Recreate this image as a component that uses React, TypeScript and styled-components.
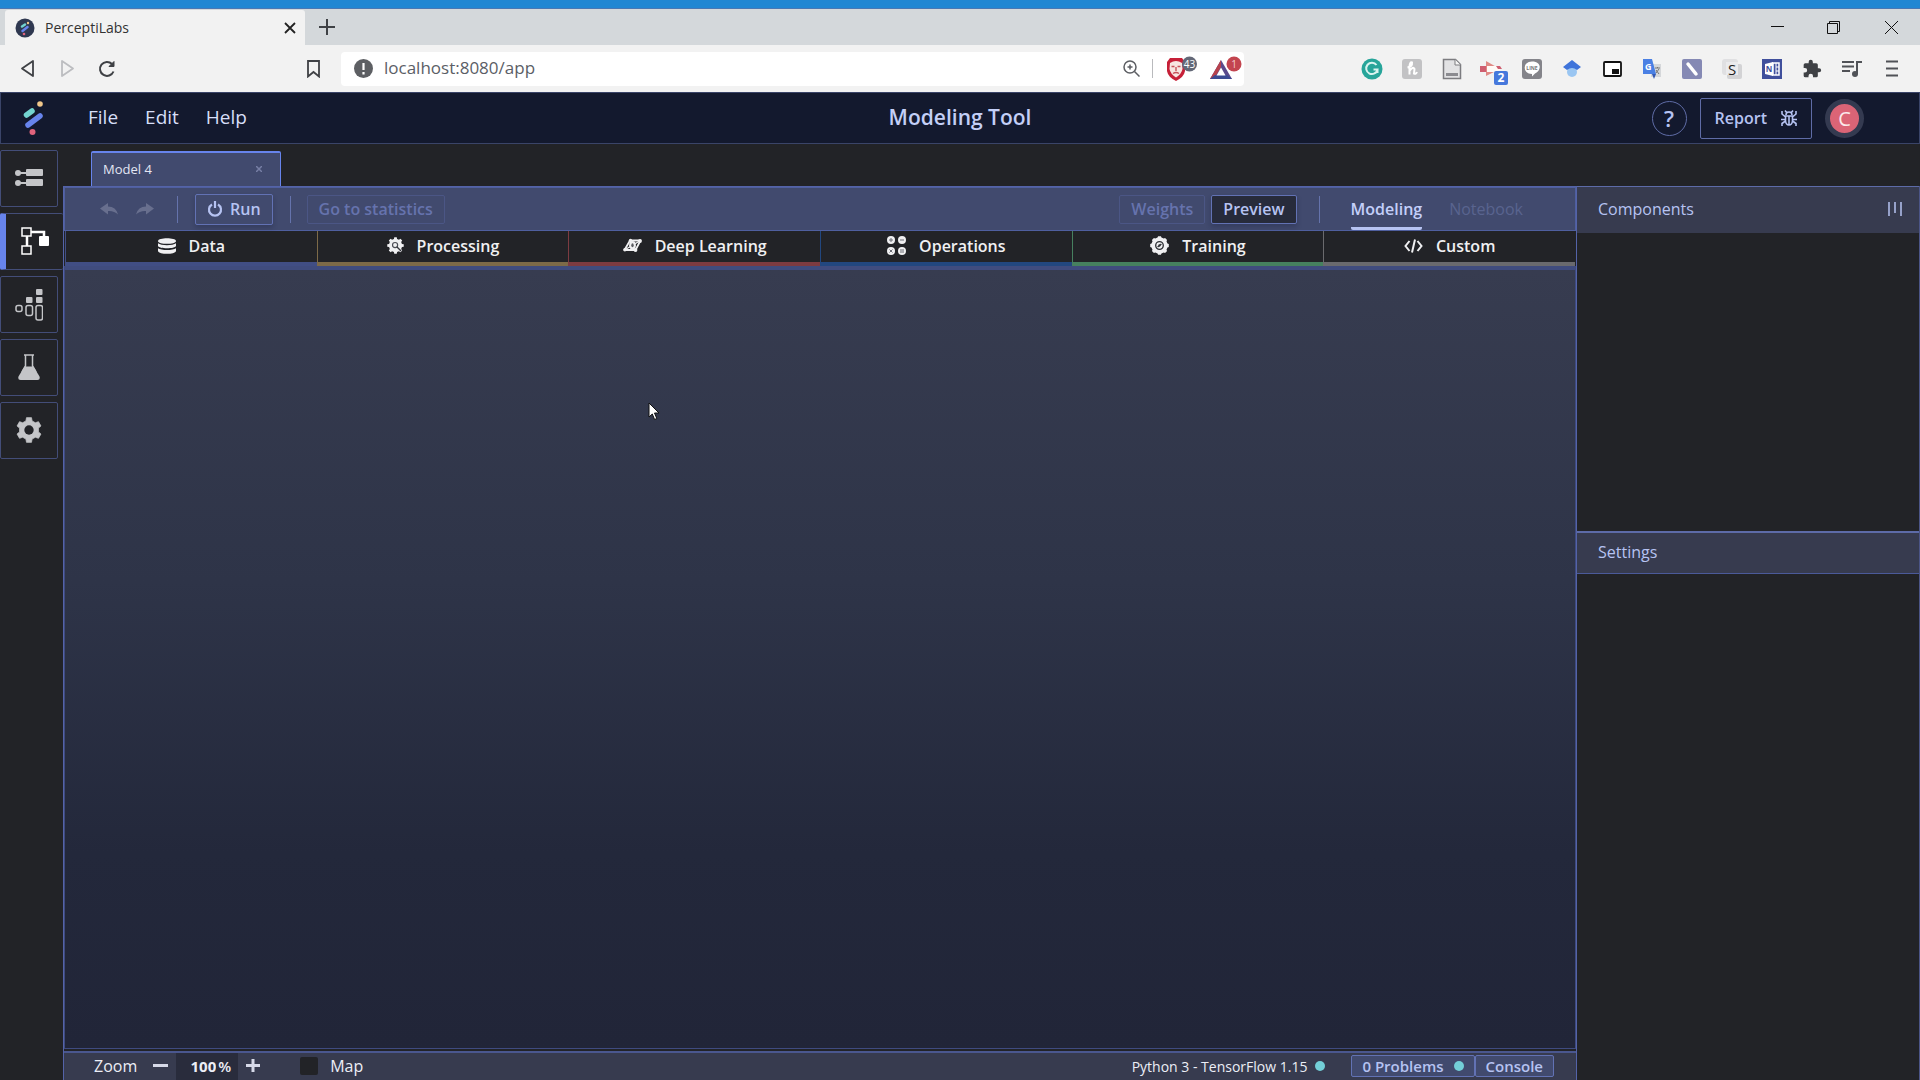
import React from "react";
import styled, { createGlobalStyle } from "styled-components";

const ui = `"Open Sans", "Noto Sans", sans-serif`;
const c = {
  ink: "#222327",
  panel: "#373b4f",
  bar: "#414a6e",
  text: "#b6c3f2",
  accent: "#6784ec",
  teal: "#73cfd8",
};

const GlobalStyle = createGlobalStyle`
  * { box-sizing: border-box; }
  body { margin: 0; background: ${c.ink}; font-family: ${ui}; overflow: hidden; }
  button, input { font: inherit; color: inherit; margin: 0; padding: 0; border: 0; background: none; }
  button { cursor: pointer; }
  svg { display: block; flex: none; }
`;

const Window = styled.div`
  display: flex;
  flex-direction: column;
  height: 100vh;
`;

/* Browser chrome */
const Desktop = styled.div`
  height: 9px;
  background: #2187d3;
  border-bottom: 1px solid #4a78b4;
`;
const TabStrip = styled.div`
  display: flex;
  height: 36px;
  padding: 1px 0 0 5px;
  background: #d4d8db;
`;
const BrowserTab = styled.div`
  display: flex;
  align-items: center;
  width: 300px;
  padding: 0 8px 0 10px;
  gap: 10px;
  background: #f2f2f2;
  border-radius: 3px 3px 0 0;
  font-size: 14px;
  color: #333;
`;
const Grow = styled.span`
  flex: 1;
`;
const ChromeButton = styled.button<{ $w: number }>`
  display: flex;
  align-items: center;
  justify-content: center;
  width: ${(p) => p.$w}px;
  height: 34px;
  color: #3f4145;
`;
const Toolbar = styled.div`
  display: flex;
  align-items: center;
  height: 47px;
  padding: 0 8px 0 7px;
  background: #f2f2f2;
`;
const Navigation = styled.div`
  display: flex;
  margin-right: 169px;
`;
const Address = styled.label`
  display: flex;
  align-items: center;
  flex: 1;
  height: 34px;
  margin: 0 108px 0 11px;
  padding: 0 2px 0 13px;
  border-radius: 4px;
  background: #fff;
  gap: 11px;
`;
const AddressInput = styled.input`
  flex: 1;
  padding-bottom: 2px;
  font-size: 17px;
  color: #5b5e66;
  outline: 0;
`;
const Shields = styled.div`
  display: flex;
  align-items: center;
  gap: 12px;
`;
const Rule = styled.span`
  width: 1px;
  height: 19px;
  background: #b9babd;
`;
const Extensions = styled.div`
  display: flex;
`;

/* Application header */
const Header = styled.header`
  display: grid;
  grid-template-columns: 1fr auto 1fr;
  align-items: center;
  height: 52px;
  border: 1px solid #3a4468;
  background: #13192e;
  color: #d7dff8;
`;
const MenuBar = styled.nav`
  display: flex;
  align-items: center;
  padding-left: 20px;
`;
const Menus = styled.div`
  display: flex;
  gap: 27px;
  padding: 0 0 2px 43px;
  font-size: 19px;
`;
const Title = styled.h1`
  margin: 0;
  padding-bottom: 2px;
  font-size: 21px;
  font-weight: 600;
  color: #c3cff7;
`;
const Account = styled.div`
  display: flex;
  align-items: center;
  justify-content: flex-end;
  gap: 13px;
  padding-right: 55px;
  color: ${c.text};
`;
const HelpButton = styled.button`
  width: 35px;
  height: 35px;
  border: 1px solid #5f6ca6;
  border-radius: 50%;
  font-size: 22px;
  font-weight: 600;
  line-height: 32px;
`;
const ReportButton = styled.button`
  display: flex;
  align-items: center;
  gap: 14px;
  height: 41px;
  padding: 0 14px;
  border: 1px solid #5f6ca6;
  border-radius: 2px;
  font-size: 16px;
  font-weight: 600;
`;
const Avatar = styled.button`
  width: 39px;
  height: 39px;
  border: 5px solid #343a50;
  border-radius: 50%;
  background: #db6476;
  color: #fbe9ec;
  font-size: 20px;
  line-height: 27px;
`;

/* Frame */
const Frame = styled.div`
  display: flex;
  flex: 1;
  min-height: 0;
`;
const Sidebar = styled.nav`
  display: flex;
  flex-direction: column;
  gap: 6px;
  width: 63px;
  padding-top: 6px;
`;
const SideButton = styled.button<{ $active?: boolean }>`
  display: flex;
  align-items: center;
  justify-content: center;
  width: ${(p) => (p.$active ? 63 : 58)}px;
  height: 57px;
  padding-bottom: 1px;
  border: 1px solid #434d78;
  border-width: ${(p) => (p.$active ? "1px 0 1px 6px" : "1px")};
  border-left-color: ${(p) => (p.$active ? c.accent : "#434d78")};
  border-radius: 2px;
  color: ${(p) => (p.$active ? "#fff" : "#c4c5c8")};
`;
const Content = styled.div`
  display: flex;
  flex-direction: column;
  flex: 1;
  min-width: 0;
`;
const ModelTabs = styled.div`
  display: flex;
  align-items: flex-end;
  height: 42px;
  padding-left: 28px;
`;
const ModelTab = styled.div`
  display: flex;
  align-items: center;
  justify-content: space-between;
  width: 190px;
  height: 35px;
  padding: 0 18px 2px 11px;
  border: 1px solid ${c.accent};
  border-width: 2px 1px 0;
  border-radius: 2px 2px 0 0;
  background: ${c.bar};
  color: #e3e6f3;
  font-size: 13px;
`;
const CloseModel = styled.button`
  color: #777fa5;
  display: flex;
`;
const Split = styled.div`
  display: flex;
  flex: 1;
  min-height: 0;
`;
const Editor = styled.main`
  display: flex;
  flex-direction: column;
  flex: 1;
  min-width: 0;
  border: 1px solid #5463a8;
  border-bottom: 0;
`;
const Tools = styled.div`
  display: flex;
  align-items: center;
  height: 44px;
  padding: 0 52px 0 35px;
  border: 1px solid #4f5f9f;
  background: ${c.bar};
  color: ${c.text};
  font-size: 16px;
  font-weight: 600;
`;
const ToolGroup = styled.div<{ $gap: number }>`
  display: flex;
  align-items: center;
  gap: ${(p) => p.$gap}px;
`;
const Divider = styled.span<{ $before: number; $after: number }>`
  width: 1px;
  height: 27px;
  margin: 0 ${(p) => p.$after}px 0 ${(p) => p.$before}px;
  background: #6573ac;
`;
const IconButton = styled.button`
  display: flex;
  color: #686f8e;
`;
const ToolButton = styled.button<{ $tone: "normal" | "faint" | "dark" }>`
  display: flex;
  align-items: center;
  gap: 7px;
  height: ${(p) => (p.$tone === "normal" ? 31 : 29)}px;
  padding: 0 11px;
  border: 1px solid ${(p) => (p.$tone === "faint" ? "#4b5685" : "#6272b4")};
  border-radius: 2px;
  background: ${(p) => (p.$tone === "dark" ? "#272b3b" : "transparent")};
  color: ${(p) => (p.$tone === "faint" ? "#6673ad" : c.text)};
  box-shadow: ${(p) => (p.$tone === "faint" ? "none" : "0 3px 5px rgba(20, 24, 50, 0.25)")};
`;
const ViewTab = styled.button<{ $active?: boolean }>`
  height: 42px;
  padding-top: ${(p) => (p.$active ? 3 : 0)}px;
  border-bottom: ${(p) => (p.$active ? "3px solid #b6c3f2" : "0")};
  border-radius: 2px;
  font-weight: ${(p) => (p.$active ? 600 : 400)};
  color: ${(p) => (p.$active ? "#c3cffa" : "#59648f")};
`;
const Categories = styled.div`
  display: grid;
  grid-template-columns: repeat(6, 1fr);
  margin: 0 1px;
  background: ${c.ink};
`;
const Category = styled.button<{ $color: string }>`
  display: flex;
  align-items: center;
  justify-content: center;
  gap: 13px;
  height: 35px;
  padding-bottom: 2px;
  border-left: 1px solid ${(p) => p.$color};
  border-bottom: 4px solid ${(p) => p.$color};
  color: #f0f0f2;
  font-size: 16px;
  font-weight: 600;
`;
const Canvas = styled.div`
  flex: 1;
  border: 1px solid #3f4b80;
  border-top: 4px solid #404c7e;
  background: linear-gradient(#373c50, #2e3448 40%, #23283b 75%, #212538);
`;
const StatusBar = styled.footer`
  display: flex;
  align-items: center;
  height: 29px;
  margin-top: 2px;
  padding: 0 22px 1px 30px;
  border-top: 2px solid #4a578f;
  background: ${c.panel};
  color: #eceef6;
  font-size: 16px;
`;
const ZoomControls = styled.div`
  display: flex;
  align-items: center;
  gap: 8px;
`;
const ZoomLabel = styled.span`
  margin-right: 8px;
`;
const StepButton = styled.button`
  display: flex;
`;
const ZoomValue = styled.label`
  display: flex;
  align-items: center;
  gap: 2px;
  width: 62px;
  height: 27px;
  padding-left: 3px;
  background: #292c3c;
  font-size: 15px;
  font-weight: 600;
`;
const ZoomInput = styled.input`
  width: 37px;
  text-align: right;
  font-weight: 700;
`;
const MapToggle = styled.label`
  display: flex;
  align-items: center;
  gap: 12px;
  margin-left: 40px;
`;
const Check = styled.input`
  appearance: none;
  width: 18px;
  height: 18px;
  border-radius: 2px;
  background: ${c.ink};
`;
const Kernel = styled.span`
  display: flex;
  align-items: center;
  gap: 8px;
  margin-right: 26px;
  font-size: 14px;
`;
const Dot = styled.span`
  width: 10px;
  height: 10px;
  border-radius: 50%;
  background: ${c.teal};
`;
const StatusButton = styled.button`
  display: flex;
  align-items: center;
  gap: 10px;
  height: 22px;
  padding: 0 10px;
  border: 1px solid #6272b4;
  border-radius: 2px;
  background: ${c.bar};
  color: ${c.text};
  font-size: 15px;
  font-weight: 600;
`;
const Inspector = styled.aside`
  display: flex;
  flex-direction: column;
  width: 343px;
  border-right: 1px solid #4b5486;
`;
const InspectorSection = styled.section<{ $basis: string }>`
  flex: ${(p) => p.$basis};
`;
const InspectorHeading = styled.header<{ $h: number; $strong?: boolean }>`
  display: flex;
  align-items: center;
  justify-content: space-between;
  height: ${(p) => p.$h}px;
  padding: 0 17px 2px 21px;
  border-top: ${(p) => (p.$strong ? 2 : 1)}px solid #5d6ba8;
  border-bottom: 1px solid ${(p) => (p.$strong ? "#4b5a9a" : "#373b4f")};
  background: ${c.panel};
  color: ${c.text};
`;
const Heading = styled.h2`
  margin: 0;
  font-size: 16px;
  font-weight: 400;
`;
const Pointer = styled.svg`
  position: absolute;
  left: 648px;
  top: 402px;
`;

const Logo = ({ w, h }: { w: number; h: number }) => (
  <svg width={w} height={h} viewBox="0 0 24 36">
    <g strokeLinecap="round" fill="none">
      <path d="M5.500 15 11 11" stroke="#73d4d0" strokeWidth="5.500" />
      <path d="M7 25 19 16" stroke="#6784ec" strokeWidth="5.500" />
    </g>
    <circle cx="19" cy="4" r="2.800" fill="#f0c78a" />
    <circle cx="11.500" cy="32" r="3" fill="#e0637c" />
  </svg>
);

const gearPath = (teeth: number, r: number, R: number) => {
  const pts: string[] = [];
  for (let i = 0; i < teeth; i++) {
    const a = (i / teeth) * Math.PI * 2 - Math.PI / 2;
    const s = Math.PI / teeth;
    [[-0.62, r], [-0.38, R], [0.38, R], [0.62, r]].forEach(([k, rad]) => {
      pts.push(`${(10 + rad * Math.cos(a + k * s)).toFixed(2)} ${(10 + rad * Math.sin(a + k * s)).toFixed(2)}`);
    });
  }
  return `M${pts.join("L")}Z`;
};

const DataIcon = () => (
  <svg width="18" height="16" viewBox="0 0 18 16" fill="#f0f0f2">
    <path d="M0 3C0-.8 18-.8 18 3S0 6.800 0 3Z" />
    <path d="M0 5.200C3 7.800 15 7.800 18 5.200V8C17 11 1 11 0 8Z" />
    <path d="M0 10.200C3 12.600 15 12.600 18 10.200V13C17 16.800 1 16.800 0 13Z" />
  </svg>
);
const ProcessingIcon = () => (
  <svg width="17" height="17" viewBox="0 0 20 20">
    <path d={gearPath(8, 7.8, 9.8)} fill="#f0f0f2" />
    <circle cx="9.500" cy="9.500" r="3" fill="none" stroke="#4c4e56" strokeWidth="1.400" />
    <path d="m11.500 11.500 5 5" stroke="#34363c" strokeWidth="1.500" />
  </svg>
);
const DeepIcon = () => (
  <svg width="19" height="15" viewBox="0 0 19 15">
    <path d="M1.500 12 7 2.500 17.500 2.500 12.500 12Z" fill="none" stroke="#f0f0f2" strokeWidth="1.800" strokeLinejoin="round" />
    <path d="M1.500 12 17.500 2.500" stroke="#f0f0f2" strokeWidth="1.400" />
    <ellipse cx="9.500" cy="7.200" rx="3.400" ry="4.200" fill="#f0f0f2" />
    <ellipse cx="9.500" cy="7.200" rx="1.200" ry="2" fill="#5a5b61" />
    <circle cx="1.900" cy="11.800" r="1.700" fill="#f0f0f2" />
    <circle cx="17" cy="3" r="1.900" fill="#f0f0f2" />
    <circle cx="12.500" cy="12" r="1.900" fill="#f0f0f2" />
    <circle cx="7.500" cy="2.500" r="1.700" fill="#f0f0f2" />
  </svg>
);
const OperationsIcon = () => (
  <svg width="19" height="19" viewBox="0 0 19 19" fill="#f0f0f2">
    <circle cx="4" cy="4" r="4" />
    <circle cx="15" cy="4" r="4" />
    <circle cx="4" cy="15" r="4" />
    <circle cx="15" cy="15" r="4" />
    <path d="M4 2v4M2 4h4M13 4h4M2.500 13.500l3 3M5.500 13.500l-3 3M13 14h4M13 16h4" stroke="#6a6c74" strokeWidth="1" />
  </svg>
);
const TrainingIcon = () => (
  <svg width="19" height="19" viewBox="0 0 20 20">
    <path d={gearPath(8, 8.6, 9.9)} fill="#f0f0f2" />
    <g fill="none" stroke="#2c2e33" strokeWidth="1.400">
      <circle cx="10" cy="10" r="4" />
      <path d="M8 11.500l4-3" />
    </g>
    <circle cx="10" cy="10" r="1.200" fill="#2c2e33" />
  </svg>
);
const CustomIcon = () => (
  <svg width="19" height="14" viewBox="0 0 19 14" fill="none" stroke="#f0f0f2" strokeWidth="2">
    <path d="M5.500 2 1.500 7l4 5M13.500 2l4 5-4 5M11 .5 8 13.500" />
  </svg>
);

const categories = [
  { name: "Data", color: "#414e84", icon: <DataIcon /> },
  { name: "Processing", color: "#7d6a48", icon: <ProcessingIcon /> },
  { name: "Deep Learning", color: "#7d3b41", icon: <DeepIcon /> },
  { name: "Operations", color: "#22477f", icon: <OperationsIcon /> },
  { name: "Training", color: "#46805f", icon: <TrainingIcon /> },
  { name: "Custom", color: "#6a6a6e", icon: <CustomIcon /> },
];

const sideItems = [
  {
    name: "Model hub",
    icon: (
      <svg width="28" height="18" viewBox="0 0 28 18" fill="currentColor">
        <circle cx="3" cy="4" r="3" />
        <circle cx="3" cy="14" r="3" />
        <path d="M3 3h10v2H3zM3 13h10v2H3z" />
        <rect x="11" y="0" width="17" height="7" rx="1" />
        <rect x="11" y="10" width="17" height="7" rx="1" />
      </svg>
    ),
  },
  {
    name: "Modeling",
    active: true,
    icon: (
      <svg width="28" height="28" viewBox="0 0 28 28" fill="none" stroke="currentColor" strokeWidth="1.500">
        <rect x="1" y="1" width="9" height="8" />
        <rect x="1" y="19" width="9" height="8" />
        <path d="M6 9v10M10 5h13v5" strokeWidth="2.500" />
        <rect x="18" y="9" width="10" height="10" rx="1" fill="currentColor" stroke="none" />
      </svg>
    ),
  },
  {
    name: "Statistics",
    icon: (
      <svg width="28" height="33" viewBox="0 0 28 33">
        <g fill="none" stroke="currentColor" strokeWidth="1.500">
          <rect x="1" y="17.500" width="6" height="6" rx="2" />
          <rect x="11" y="17.500" width="6.500" height="10" rx="2" />
          <rect x="21" y="17.500" width="6.500" height="14.500" rx="2" />
        </g>
        <g fill="currentColor">
          <rect x="11" y="9" width="6.500" height="6" rx="1" />
          <rect x="21" y="9" width="6.500" height="6" rx="1" />
          <rect x="21" y="1" width="6.500" height="6" rx="1" />
        </g>
      </svg>
    ),
  },
  {
    name: "Test",
    icon: (
      <svg width="22" height="26" viewBox="0 0 22 26">
        <path d="M6 1h10M7.500 1v11L4 18M14.500 1v11l3.500 6" fill="none" stroke="currentColor" strokeWidth="1.500" />
        <path d="M6.500 12.500h9L21.500 22.500q1 3.500-2 3.500H2.500q-3 0-2-3.500Z" fill="currentColor" />
      </svg>
    ),
  },
  {
    name: "Settings",
    icon: (
      <svg width="26" height="26" viewBox="0 0 20 20">
        <path
          d={gearPath(6, 7.4, 9.7)}
          fill="currentColor"
          stroke="currentColor"
          strokeWidth=".6"
          strokeLinejoin="round"
        />
        <circle cx="10" cy="10" r="3.600" fill={c.ink} />
      </svg>
    ),
  },
];

const extensions = [
  {
    name: "Grammarly",
    icon: (
      <svg width="22" height="22" viewBox="0 0 22 22">
        <circle cx="11" cy="11" r="10.500" fill="#27a59a" />
        <path d="M15.500 7A5.700 5.700 0 1 0 16.500 11.500h-4M16.500 10.500v4.500" fill="none" stroke="#d9f4f0" strokeWidth="2" />
      </svg>
    ),
  },
  {
    name: "Honey",
    icon: (
      <svg width="22" height="22" viewBox="0 0 22 22">
        <rect x="1" y="1" width="20" height="20" rx="3" fill="#c2c2c4" />
        <path
          d="M6.500 9.500q5-1 4.500-5-2-1-2.500 4v8M8.500 13q3.500-5 5-2l-.5 4.500q2 1 3-1.500"
          fill="none"
          stroke="#fff"
          strokeWidth="2"
        />
      </svg>
    ),
  },
  {
    name: "Reader",
    icon: (
      <svg width="20" height="22" viewBox="0 0 20 22">
        <path d="M1.500 1.500h12l5 5v14h-17Z" fill="#e2e2e4" stroke="#7c7c80" strokeWidth="1.500" />
        <path d="M13 1.500V7h5.500" fill="#f6f6f6" stroke="#7c7c80" />
        <path d="M4 15h12v3H4z" fill="#8b8b90" />
      </svg>
    ),
  },
  {
    name: "Tracker",
    icon: (
      <svg width="32" height="32" viewBox="0 0 32 32">
        <path d="M4 13h6v6H4z" fill="#cf5f70" />
        <path d="M10 8l14 8-14 7z" fill="#e08a85" />
        <path d="M11 13h13v6H11z" fill="#fffaf6" />
        <path d="M20 13h4l2 3h-4z" fill="#cf5f70" />
        <rect x="18" y="18" width="14" height="14" rx="2" fill="#4678dc" />
        <text x="25" y="29" fontSize="12" fontWeight="700" textAnchor="middle" fill="#fff">2</text>
      </svg>
    ),
  },
  {
    name: "Line",
    icon: (
      <svg width="22" height="22" viewBox="0 0 22 22">
        <rect x="1" y="1" width="20" height="20" rx="3" fill="#84848a" />
        <path d="M11 3.500c10 0 9.500 9 3 12L11 18.500v-2.500C1 15.500 1.500 3.500 11 3.500Z" fill="#fff" />
        <text x="11" y="12" fontSize="5" fontWeight="700" textAnchor="middle" fill="#777">LINE</text>
      </svg>
    ),
  },
  {
    name: "Scholar",
    icon: (
      <svg width="18" height="18" viewBox="0 0 18 18">
        <circle cx="9" cy="12" r="5" fill="#9ac6f2" />
        <path d="M9 0 0 7l4 3q5-4 10 0l4-3Z" fill="#3f74da" />
      </svg>
    ),
  },
  {
    name: "Picture in picture",
    icon: (
      <svg width="19" height="16" viewBox="0 0 19 16">
        <rect x="1" y="1" width="17" height="14" rx="1" fill="#fff" stroke="#111" strokeWidth="1.800" />
        <path d="M9 8h7v5H9z" fill="#111" />
      </svg>
    ),
  },
  {
    name: "Translate",
    icon: (
      <svg width="20" height="20" viewBox="0 0 20 20">
        <path d="M9 5h10v13H9z" fill="#d5d7da" />
        <path d="M1 0h9l4 15H1Z" fill="#4a80e4" />
        <path d="M10 15h4l-2 5Z" fill="#3559b2" />
        <text x="3" y="11" fontSize="9" fontWeight="700" fill="#fff">G</text>
        <path d="M13 9h5M15.500 8v1M14 14l3-4M14 11l3 4" stroke="#777" fill="none" />
      </svg>
    ),
  },
  {
    name: "Notes",
    icon: (
      <svg width="22" height="22" viewBox="0 0 22 22">
        <rect x="1" y="1" width="20" height="20" rx="2" fill="#8589b4" />
        <path d="m7 6 8 10" stroke="#fff" strokeWidth="3.500" strokeLinecap="round" />
      </svg>
    ),
  },
  {
    name: "Scribe",
    icon: (
      <svg width="22" height="22" viewBox="0 0 22 22">
        <rect x="1" y="1" width="16" height="16" rx="3" fill="#e0e0e2" />
        <rect x="6" y="6" width="15" height="15" rx="2" fill="#d3d3d5" />
        <path d="M5 4h12v13H5z" fill="#ebebed" />
        <text x="11" y="16.500" fontSize="15" textAnchor="middle" fill="#222">S</text>
      </svg>
    ),
  },
  {
    name: "OneNote",
    icon: (
      <svg width="22" height="22" viewBox="0 0 22 22">
        <path d="M1 1h20v20H1z" fill="#404f9c" />
        <path d="M12 5h6v12h-6z" fill="none" stroke="#fff" strokeWidth="1.500" />
        <path d="M15 5v12M15 9h3M15 13h3" stroke="#fff" />
        <path d="M4 6l8-2v14l-8-2z" fill="#fff" />
        <text x="8" y="14" fontSize="8" fontWeight="700" textAnchor="middle" fill="#404f9c">N</text>
      </svg>
    ),
  },
  {
    name: "Extensions",
    icon: (
      <svg width="20" height="20" viewBox="0 0 24 24" fill="#3f4145">
        <path d="M20.500 11H19V7a2 2 0 0 0-2-2h-4V3.500a2.500 2.500 0 0 0-5 0V5H4a2 2 0 0 0-2 2v3.800h1.500a2.700 2.700 0 0 1 0 5.400H2V20a2 2 0 0 0 2 2h3.800v-1.500a2.700 2.700 0 0 1 5.400 0V22H17a2 2 0 0 0 2-2v-4h1.500a2.500 2.500 0 0 0 0-5Z" />
      </svg>
    ),
  },
  {
    name: "Playlist",
    icon: (
      <svg width="20" height="18" viewBox="0 0 20 18">
        <path d="M0 2h12M0 6.500h12M0 11h8M15 14V2h5" stroke="#505257" strokeWidth="2" fill="none" />
        <circle cx="13" cy="14" r="3" fill="#505257" />
      </svg>
    ),
  },
  {
    name: "Menu",
    icon: (
      <svg width="12" height="17" viewBox="0 0 12 17">
        <path d="M0 1.500h12M0 8.500h12M0 15.500h12" stroke="#505257" strokeWidth="2" />
      </svg>
    ),
  },
];

export default function App() {
  return (
    <Window>
      <GlobalStyle />
      <Desktop />
      <TabStrip>
        <BrowserTab>
          <svg width="20" height="20" viewBox="0 0 20 20">
            <circle cx="10" cy="10" r="9.500" fill="#2f3850" />
            <path d="m7 8.500 3-2" stroke="#73d4d0" strokeWidth="2.500" strokeLinecap="round" />
            <path d="m7.500 13 5-4" stroke="#6784ec" strokeWidth="2.500" strokeLinecap="round" />
            <circle cx="13" cy="5" r="1.200" fill="#f0c78a" />
            <circle cx="9" cy="16" r="1.300" fill="#e0637c" />
          </svg>
          PerceptiLabs
          <Grow />
          <ChromeButton $w={14} aria-label="Close tab">
            <svg width="12" height="12" viewBox="0 0 12 12" stroke="#222" strokeWidth="1.800">
              <path d="m1 1 10 10M11 1 1 11" />
            </svg>
          </ChromeButton>
        </BrowserTab>
        <ChromeButton $w={44} aria-label="New tab">
          <svg width="16" height="16" viewBox="0 0 16 16" stroke="currentColor" strokeWidth="2">
            <path d="M8 0v16M0 8h16" />
          </svg>
        </ChromeButton>
        <Grow />
        <ChromeButton $w={56} aria-label="Minimize">
          <svg width="13" height="10" viewBox="0 0 13 10" stroke="#111">
            <path d="M0 4.500h13" />
          </svg>
        </ChromeButton>
        <ChromeButton $w={57} aria-label="Restore">
          <svg width="13" height="13" viewBox="0 0 13 13" fill="none" stroke="#111">
            <path d="M.5 2.500h10v10H.5zM2.500 2.500v-2h10v10h-2" />
          </svg>
        </ChromeButton>
        <ChromeButton $w={58} aria-label="Close">
          <svg width="13" height="13" viewBox="0 0 13 13" stroke="#111">
            <path d="m0 0 13 13M13 0 0 13" />
          </svg>
        </ChromeButton>
      </TabStrip>
      <Toolbar>
        <Navigation>
          <ChromeButton $w={40} aria-label="Back">
            <svg width="13" height="17" viewBox="0 0 13 17" fill="none" stroke="currentColor" strokeWidth="1.800" strokeLinejoin="round">
              <path d="M12 1v15L1 8.500Z" />
            </svg>
          </ChromeButton>
          <ChromeButton $w={40} aria-label="Forward">
            <svg width="13" height="17" viewBox="0 0 13 17" fill="none" stroke="#bcbdc0" strokeWidth="1.800" strokeLinejoin="round">
              <path d="M1 1v15l11-7.500Z" />
            </svg>
          </ChromeButton>
          <ChromeButton $w={40} aria-label="Reload">
            <svg width="18" height="18" viewBox="0 0 18 18" fill="none" stroke="currentColor" strokeWidth="2">
              <path d="M14 4A7 7 0 1 0 15.500 11.500" />
              <path d="M16 1.500v5h-5z" fill="currentColor" strokeWidth="1" />
            </svg>
          </ChromeButton>
        </Navigation>
        <ChromeButton $w={34} aria-label="Bookmark">
          <svg width="13" height="18" viewBox="0 0 13 18" fill="none" stroke="currentColor" strokeWidth="1.800">
            <path d="M1 1h11v15.500L6.500 12 1 16.500Z" />
          </svg>
        </ChromeButton>
        <Address>
          <svg width="19" height="19" viewBox="0 0 19 19">
            <circle cx="9.500" cy="9.500" r="9.500" fill="#5d5f63" />
            <path d="M9.500 4v7M9.500 13v2.500" stroke="#fff" strokeWidth="2.200" />
          </svg>
          <AddressInput aria-label="Address" defaultValue="localhost:8080/app" />
          <Shields>
            <svg width="17" height="17" viewBox="0 0 17 17" fill="none" stroke="#5c5e63" strokeWidth="1.500">
              <circle cx="7" cy="7" r="6" />
              <path d="M11.500 11.500 16.500 16.500M7 4.500v5M4.500 7h5" />
            </svg>
            <Rule />
            <svg width="32" height="26" viewBox="0 0 32 26">
              <path d="M2 6 5 2h12l3 4v9q-1 6-9 10-8-4-9-10Z" fill="#c62038" />
              <path d="M5 7q6-4 12 0l.5 6q-1 5-6.500 8.500Q5.500 18 4.500 13Z" fill="#f7e6e2" />
              <path d="M6.500 10.500h3M12.500 10.500h3M11 11v4M8 17.500q3-2 6 0" stroke="#c8525a" strokeWidth="1.400" fill="none" />
              <circle cx="24.500" cy="8" r="7.500" fill="#636877" />
              <text x="24.500" y="12" fontSize="10" textAnchor="middle" fill="#fff">43</text>
            </svg>
            <svg width="33" height="26" viewBox="0 0 33 26">
              <path d="M12 4 1 23h22Z" fill="#5a4a8c" />
              <path d="M12 4 1 23l5-2 6-10Z" fill="#b8414c" />
              <path d="M1 23h22l-5-4H6Z" fill="#3b4a93" />
              <path d="m12 11.500-4.500 8h9Z" fill="#fff" />
              <circle cx="25" cy="8" r="7.500" fill="#c3454f" />
              <text x="25" y="12" fontSize="10" textAnchor="middle" fill="#f3c9cc">1</text>
            </svg>
          </Shields>
        </Address>
        <Extensions>
          {extensions.map((e) => (
            <ChromeButton key={e.name} $w={40} aria-label={e.name}>
              {e.icon}
            </ChromeButton>
          ))}
        </Extensions>
      </Toolbar>
      <Header>
        <MenuBar>
          <Logo w={24} h={36} />
          <Menus>
            <button>File</button>
            <button>Edit</button>
            <button>Help</button>
          </Menus>
        </MenuBar>
        <Title>Modeling Tool</Title>
        <Account>
          <HelpButton>?</HelpButton>
          <ReportButton>
            Report
            <svg width="16" height="18" viewBox="0 0 16 18" fill="none" stroke="currentColor" strokeWidth="1.600">
              <path d="M4.500 7h7v5q-.5 4-3.500 4t-3.500-4ZM5 6q0-3 3-3t3 3M8 7v9M4 1.500 6 4M12 1.500 10 4M1 2v3l3.500 3M15 2v3l-3.500 3M0 10.500h4.500M16 10.500h-4.500M1 17v-2.500L4.500 12M15 17v-2.500L11.500 12" />
            </svg>
          </ReportButton>
          <Avatar>C</Avatar>
        </Account>
      </Header>
      <Frame>
        <Sidebar>
          {sideItems.map((s) => (
            <SideButton key={s.name} aria-label={s.name} $active={s.active}>
              {s.icon}
            </SideButton>
          ))}
        </Sidebar>
        <Content>
          <ModelTabs>
            <ModelTab>
              Model 4
              <CloseModel aria-label="Close model">
                <svg width="6" height="6" viewBox="0 0 6 6" stroke="currentColor" strokeWidth="1.500">
                  <path d="m0 0 6 6M6 0 0 6" />
                </svg>
              </CloseModel>
            </ModelTab>
          </ModelTabs>
          <Split>
            <Editor>
              <Tools>
                <ToolGroup $gap={18}>
                  <IconButton aria-label="Undo">
                    <svg width="18" height="12" viewBox="0 0 18 12" fill="currentColor">
                      <path d="M8 0v3.500q8 0 10 8-4-4-10-3.500V11.500L0 5.500Z" />
                    </svg>
                  </IconButton>
                  <IconButton aria-label="Redo">
                    <svg width="18" height="12" viewBox="0 0 18 12" fill="currentColor">
                      <path d="M10 0v3.500q-8 0-10 8 4-4 10-3.500V11.500l8-6Z" />
                    </svg>
                  </IconButton>
                </ToolGroup>
                <Divider $before={23} $after={17} />
                <ToolButton $tone="normal">
                  <svg width="16" height="17" viewBox="0 0 16 17" fill="none" stroke="currentColor" strokeWidth="2.200">
                    <path d="M5 3.500a6 6 0 1 0 6 0M8 0v7" />
                  </svg>
                  Run
                </ToolButton>
                <Divider $before={17} $after={16} />
                <ToolButton $tone="faint">Go to statistics</ToolButton>
                <Grow />
                <ToolGroup $gap={6}>
                  <ToolButton $tone="faint">Weights</ToolButton>
                  <ToolButton $tone="dark">Preview</ToolButton>
                </ToolGroup>
                <Divider $before={22} $after={31} />
                <ToolGroup $gap={27}>
                  <ViewTab $active>Modeling</ViewTab>
                  <ViewTab>Notebook</ViewTab>
                </ToolGroup>
              </Tools>
              <Categories>
                {categories.map((k) => (
                  <Category key={k.name} $color={k.color}>
                    {k.icon}
                    {k.name}
                  </Category>
                ))}
              </Categories>
              <Canvas />
              <StatusBar>
                <ZoomControls>
                  <ZoomLabel>Zoom</ZoomLabel>
                  <StepButton aria-label="Zoom out">
                    <svg width="15" height="15" viewBox="0 0 15 15" stroke="#d6d9e8" strokeWidth="3">
                      <path d="M0 6.500h15" />
                    </svg>
                  </StepButton>
                  <ZoomValue>
                    <ZoomInput aria-label="Zoom level" defaultValue="100" />%
                  </ZoomValue>
                  <StepButton aria-label="Zoom in">
                    <svg width="14" height="14" viewBox="0 0 14 14" stroke="#d6d9e8" strokeWidth="3">
                      <path d="M0 6.500h14M7 0v13" />
                    </svg>
                  </StepButton>
                </ZoomControls>
                <MapToggle>
                  <Check type="checkbox" />
                  Map
                </MapToggle>
                <Grow />
                <Kernel>
                  Python 3 - TensorFlow 1.15
                  <Dot />
                </Kernel>
                <StatusButton>
                  0 Problems
                  <Dot />
                </StatusButton>
                <StatusButton>Console</StatusButton>
              </StatusBar>
            </Editor>
            <Inspector>
              <InspectorSection $basis="0 0 345px">
                <InspectorHeading $h={47}>
                  <Heading>Components</Heading>
                  <IconButton aria-label="Toggle panel">
                    <svg width="14" height="14" viewBox="0 0 14 14" stroke={c.text} strokeWidth="1.500">
                      <path d="M1 0v14M7 0v11M13 0v14" />
                    </svg>
                  </IconButton>
                </InspectorHeading>
              </InspectorSection>
              <InspectorSection $basis="1 1 0">
                <InspectorHeading $h={43} $strong>
                  <Heading>Settings</Heading>
                </InspectorHeading>
              </InspectorSection>
            </Inspector>
          </Split>
        </Content>
      </Frame>
      <Pointer width="12" height="19" viewBox="0 0 12 19">
        <path d="M1 1v14l3.300-3 2.300 5.500 2.200-1L6.500 11H11Z" fill="#fff" stroke="#111" />
      </Pointer>
    </Window>
  );
}
